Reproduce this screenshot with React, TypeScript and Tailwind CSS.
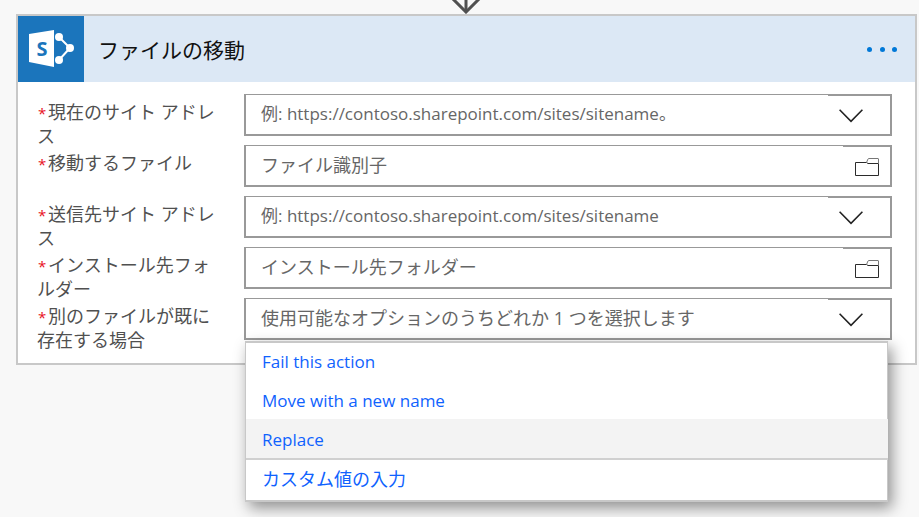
import React from 'react';

const font = "font-['Open_Sans','Noto_Sans_CJK_JP',sans-serif]";

interface Field {
  label: string;
  placeholder: string;
  kind: 'select' | 'file';
  size: string;
}

const fields: Field[] = [
  { label: '現在のサイト アドレス', placeholder: '例: https://contoso.sharepoint.com/sites/sitename。', kind: 'select', size: 'text-[17px]' },
  { label: '移動するファイル', placeholder: 'ファイル識別子', kind: 'file', size: 'text-[18px]' },
  { label: '送信先サイト アドレス', placeholder: '例: https://contoso.sharepoint.com/sites/sitename', kind: 'select', size: 'text-[17px]' },
  { label: 'インストール先フォルダー', placeholder: 'インストール先フォルダー', kind: 'file', size: 'text-[18px]' },
  { label: '別のファイルが既に存在する場合', placeholder: '使用可能なオプションのうちどれか 1 つを選択します', kind: 'select', size: 'text-[18px]' },
];

const options = [
  { text: 'Fail this action', className: 'h-[38px] text-[17px]' },
  { text: 'Move with a new name', className: 'h-[38px] pt-[2px] text-[17px]' },
  { text: 'Replace', className: 'h-[41px] pt-[3px] mr-[-1px] text-[17px] bg-[#f3f3f3] border-b-2 border-[#d0d0d0]' },
  { text: 'カスタム値の入力', className: 'h-[40px] text-[18px]' },
];

function SharePointLogo() {
  return (
    <svg width="46" height="42" viewBox="0 0 46 42" fill="none">
      <path d="M1 6 L26 2 V39 L1 34 Z" fill="#fff" />
      <text x="14" y="27.5" textAnchor="middle" fontSize="20" fontWeight="700" fontFamily="Open Sans, sans-serif" fill="#1b75bc">S</text>
      <path d="M31 9 L42 20 L31 32" stroke="#fff" strokeWidth="2" />
      <circle cx="31" cy="9" r="4" fill="#fff" />
      <circle cx="42" cy="20" r="4" fill="#fff" />
      <circle cx="31" cy="32" r="4" fill="#fff" />
    </svg>
  );
}

function Chevron() {
  return (
    <svg width="24" height="14" viewBox="0 0 24 14" fill="none" stroke="#222222" strokeWidth="1.6">
      <path d="M0.6 0.8 L12 12.4 L23.4 0.8" />
    </svg>
  );
}

function FolderIcon() {
  return (
    <svg width="24" height="18" viewBox="0 0 24 18" fill="none" stroke="#2b2b2b" strokeWidth="1">
      <path d="M0.5 4.5 H11.5 L13 5.5 H23.5 V17.5 H0.5 Z" />
      <path d="M11.5 4.5 L13 1 Q13.2 0.5 14 0.5 H23 Q23.5 0.5 23.5 1 V5.5" stroke="#777" />
    </svg>
  );
}

function FieldRow({ field }: { field: Field }) {
  return (
    <div className="flex h-[42px]">
      <div className="w-[188px] mr-[19px] mt-[7px] text-[18px] leading-[23px] text-[#505050]">
        <span className="inline-block w-[11px] text-[#e81123] text-[15px] pl-[1px]">*</span>
        {field.label}
      </div>
      <div className="relative w-[648px] h-[42px] border-2 border-[#999999] flex items-center pl-[15px] bg-white">
        <span className={`absolute left-0 top-[-1px] h-[1px] bg-white ${field.kind === 'select' ? 'w-[582px]' : 'w-[597px]'}`} />
        <span className={`flex-1 text-[#666666] whitespace-nowrap -mt-[2px] ${field.size}`}>{field.placeholder}</span>
        {field.kind === 'select' ? (
          <div className="mr-[27px] flex mt-[1px]"><Chevron /></div>
        ) : (
          <div className="mr-[11px] mt-[1px] flex"><FolderIcon /></div>
        )}
      </div>
    </div>
  );
}

export default function App() {
  return (
    <div className={`w-[919px] h-[517px] overflow-hidden bg-[#f8f8f8] flex flex-col ${font}`}>
      <div className="h-[14px] pl-[450px] flex">
        <svg width="32" height="14" viewBox="0 0 32 14" fill="none" stroke="#505050" strokeWidth="3">
          <path d="M2 -2 L16 12 L30 -2" />
          <path d="M16 -2 V12" />
        </svg>
      </div>
      <div className="relative ml-[16px] w-[901px] h-[351px] border-2 border-[#c8c8c8] bg-white">
        <div className="h-[66px] flex items-center bg-[#dce8f5]">
          <div className="w-[66px] h-[66px] bg-[#1b75bc] flex items-center justify-center">
            <SharePointLogo />
          </div>
          <span className="ml-[14px] mt-[3px] text-[21px] text-[#111111]">ファイルの移動</span>
          <div className="ml-auto mr-[18px] flex gap-[7.5px]">
            <span className="w-[5px] h-[5px] rounded-full bg-[#0078d7]" />
            <span className="w-[5px] h-[5px] rounded-full bg-[#0078d7]" />
            <span className="w-[5px] h-[5px] rounded-full bg-[#0078d7]" />
          </div>
        </div>
        <div className="pl-[19px] pt-[12px] flex flex-col gap-[9px]">
          {fields.map(f => <FieldRow key={f.label} field={f} />)}
        </div>
        <div className="absolute left-[227px] top-[325px] w-[643px] h-[161px] border-x border-y-2 border-[#c8c8c8] bg-white shadow-[4px_6px_14px_rgba(0,0,0,0.42)] flex flex-col">
          {options.map(o => (
            <div key={o.text} className={`flex items-center pl-[16px] text-[#0f62fe] ${o.className}`}>
              <span className="-mt-[1px]">{o.text}</span>
            </div>
          ))}
        </div>
      </div>
    </div>
  );
}
